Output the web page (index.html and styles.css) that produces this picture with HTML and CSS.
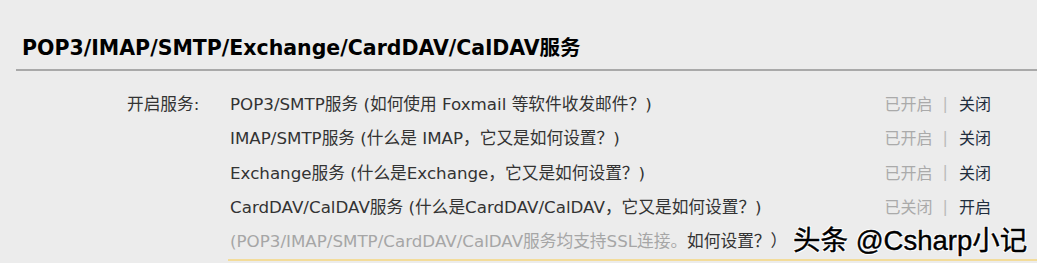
FILE: index.html
```html
<!DOCTYPE html>
<html lang="zh">
<head>
<meta charset="utf-8">
<link rel="stylesheet" href="styles.css">
</head>
<body>
<div class="section">
  <h2 class="title">POP3/IMAP/SMTP/Exchange/CardDAV/CalDAV服务</h2>
  <div class="rows">
    <div class="row">
      <div class="label">开启服务:</div>
      <div class="content">POP3/SMTP服务 <span class="help">(如何使用 Foxmail 等软件收发邮件？)</span></div>
      <div class="status"><span class="state">已开启</span><span class="sep">|</span><span class="action">关闭</span></div>
    </div>
    <div class="row">
      <div class="label"></div>
      <div class="content">IMAP/SMTP服务 <span class="help">(什么是 IMAP，它又是如何设置？)</span></div>
      <div class="status"><span class="state">已开启</span><span class="sep">|</span><span class="action">关闭</span></div>
    </div>
    <div class="row">
      <div class="label"></div>
      <div class="content">Exchange服务 <span class="help">(什么是Exchange，它又是如何设置？)</span></div>
      <div class="status"><span class="state">已开启</span><span class="sep">|</span><span class="action">关闭</span></div>
    </div>
    <div class="row">
      <div class="label"></div>
      <div class="content">CardDAV/CalDAV服务 <span class="help">(什么是CardDAV/CalDAV，它又是如何设置？)</span></div>
      <div class="status"><span class="state">已关闭</span><span class="sep">|</span><span class="action">开启</span></div>
    </div>
    <div class="row">
      <div class="label"></div>
      <div class="content note">(POP3/IMAP/SMTP/CardDAV/CalDAV服务均支持SSL连接。<span class="note-link">如何设置？）</span></div>
    </div>
  </div>
  <div class="notice"></div>
</div>
<div class="watermark">头条 @Csharp小记</div>
</body>
</html>
```
FILE: styles.css
```css
html, body {
  margin: 0;
  padding: 0;
  background: #ececec;
  height: 263px;
  overflow: hidden;
}
body {
  font-family: "DejaVu Sans", "Noto Sans CJK SC", sans-serif;
  color: #333;
  position: relative;
}
.section {
  padding-left: 16px;
}
.title {
  margin: 0;
  padding: 36px 0 8px 6px;
  font-size: 20.5px;
  line-height: 25px;
  font-weight: bold;
  color: #000;
  border-bottom: 2px solid #a9a9a9;
}
.rows {
  margin-top: 15px;
  margin-left: 111px;
  margin-right: 46px;
}
.row {
  display: flex;
  align-items: center;
  height: 34.3px;
  font-size: 16.7px;
}
.label {
  width: 103px;
  flex: none;
  color: #333;
}
.content {
  flex: 1;
  white-space: nowrap;
  color: #333;
}
.help {
  color: #333;
}
.status {
  flex: none;
  display: flex;
  align-items: center;
  font-size: 16px;
}
.state {
  color: #aaa;
}
.sep {
  color: #bbb;
  margin: 0 11px 0 10px;
}
.action {
  color: #1f2d3d;
}
.note {
  color: #a6a6a6;
}
.note-link {
  color: #333;
}
.notice {
  margin-left: 212px;
  margin-top: 2px;
  border-top: 2px solid #f3dc9a;
}
.watermark {
  position: absolute;
  left: 793px;
  top: 223px;
  font-family: "Liberation Sans", "Noto Sans CJK SC", sans-serif;
  font-size: 27.5px;
  line-height: 36px;
  color: #000;
  white-space: nowrap;
  -webkit-text-stroke: 0.4px #000;
  text-shadow: 1px 1px 0 #fff, -1px -1px 0 #fff, 1px -1px 0 #fff, -1px 1px 0 #fff, 0 1px 0 #fff, 1px 0 0 #fff;
}
```
